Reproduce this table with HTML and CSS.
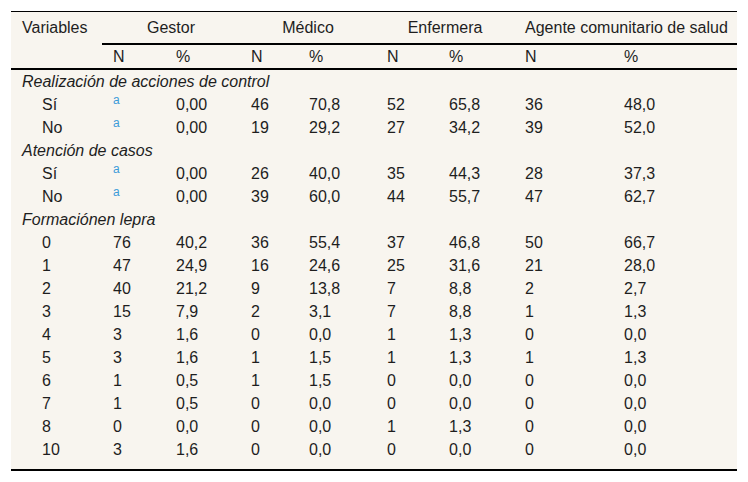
FILE: index.html
```html
<!DOCTYPE html>
<html lang="es">
<head>
<meta charset="utf-8">
<title>Tabla</title>
<link rel="stylesheet" href="styles.css">
</head>
<body>
<div class="table-wrap">
<table class="data">
<colgroup>
<col class="c-var"><col class="c-gn"><col class="c-gp"><col class="c-mn"><col class="c-mp"><col class="c-en"><col class="c-ep"><col class="c-an"><col class="c-ap">
</colgroup>
<thead>
<tr class="head-groups">
<th class="var">Variables</th>
<th class="grp" colspan="2">Gestor</th>
<th class="grp" colspan="2">Médico</th>
<th class="grp" colspan="2">Enfermera</th>
<th class="grp" colspan="2">Agente comunitario de salud</th>
</tr>
<tr class="head-sub">
<th></th><th>N</th><th>%</th><th>N</th><th>%</th><th>N</th><th>%</th><th>N</th><th>%</th>
</tr>
</thead>
<tbody>
<tr class="group"><td colspan="9">Realización de acciones de control</td></tr>
<tr><td class="sub">Sí</td><td><sup class="note">a</sup></td><td>0,00</td><td>46</td><td>70,8</td><td>52</td><td>65,8</td><td>36</td><td>48,0</td></tr>
<tr><td class="sub">No</td><td><sup class="note">a</sup></td><td>0,00</td><td>19</td><td>29,2</td><td>27</td><td>34,2</td><td>39</td><td>52,0</td></tr>
<tr class="group"><td colspan="9">Atención de casos</td></tr>
<tr><td class="sub">Sí</td><td><sup class="note">a</sup></td><td>0,00</td><td>26</td><td>40,0</td><td>35</td><td>44,3</td><td>28</td><td>37,3</td></tr>
<tr><td class="sub">No</td><td><sup class="note">a</sup></td><td>0,00</td><td>39</td><td>60,0</td><td>44</td><td>55,7</td><td>47</td><td>62,7</td></tr>
<tr class="group"><td colspan="9">Formaciónen lepra</td></tr>
<tr><td class="sub">0</td><td>76</td><td>40,2</td><td>36</td><td>55,4</td><td>37</td><td>46,8</td><td>50</td><td>66,7</td></tr>
<tr><td class="sub">1</td><td>47</td><td>24,9</td><td>16</td><td>24,6</td><td>25</td><td>31,6</td><td>21</td><td>28,0</td></tr>
<tr><td class="sub">2</td><td>40</td><td>21,2</td><td>9</td><td>13,8</td><td>7</td><td>8,8</td><td>2</td><td>2,7</td></tr>
<tr><td class="sub">3</td><td>15</td><td>7,9</td><td>2</td><td>3,1</td><td>7</td><td>8,8</td><td>1</td><td>1,3</td></tr>
<tr><td class="sub">4</td><td>3</td><td>1,6</td><td>0</td><td>0,0</td><td>1</td><td>1,3</td><td>0</td><td>0,0</td></tr>
<tr><td class="sub">5</td><td>3</td><td>1,6</td><td>1</td><td>1,5</td><td>1</td><td>1,3</td><td>1</td><td>1,3</td></tr>
<tr><td class="sub">6</td><td>1</td><td>0,5</td><td>1</td><td>1,5</td><td>0</td><td>0,0</td><td>0</td><td>0,0</td></tr>
<tr><td class="sub">7</td><td>1</td><td>0,5</td><td>0</td><td>0,0</td><td>0</td><td>0,0</td><td>0</td><td>0,0</td></tr>
<tr><td class="sub">8</td><td>0</td><td>0,0</td><td>0</td><td>0,0</td><td>1</td><td>1,3</td><td>0</td><td>0,0</td></tr>
<tr><td class="sub">10</td><td>3</td><td>1,6</td><td>0</td><td>0,0</td><td>0</td><td>0,0</td><td>0</td><td>0,0</td></tr>
</tbody>
</table>
</div>
</body>
</html>
```

FILE: styles.css
```css
html, body {
  margin: 0;
  padding: 0;
  background: #ffffff;
}

body {
  font-family: "Liberation Sans", Arial, sans-serif;
  font-size: 16px;
  color: #1e1e1e;
}

.table-wrap {
  margin: 11px;
  width: 726px;
  background: #f8f5ef;
  border-top: 1px solid #000;
  border-bottom: 2px solid #000;
  padding-bottom: 8px;
}

.data {
  width: 726px;
  table-layout: fixed;
  border-collapse: separate;
  border-spacing: 0;
}

.c-var { width: 91px; }
.c-gn { width: 63px; }
.c-gp { width: 75px; }
.c-mn { width: 58px; }
.c-mp { width: 78px; }
.c-en { width: 62px; }
.c-ep { width: 76px; }
.c-an { width: 99px; }
.c-ap { width: 124px; }

.data th,
.data td {
  font-weight: normal;
  text-align: left;
  line-height: 23px;
  padding: 0 0 0 11px;
  white-space: nowrap;
  vertical-align: top;
}

.head-groups th {
  padding-top: 4px;
  padding-bottom: 4px;
}

.head-groups .grp {
  text-align: center;
  padding-right: 11px;
  border-bottom: 2px solid #000;
}

.head-sub th {
  border-bottom: 2px solid #000;
}

.group td {
  font-style: italic;
}

.data td.sub {
  padding-left: 31px;
}

.note {
  font-size: 12px;
  line-height: 0;
  color: #3b9bd9;
  vertical-align: 6px;
}
```
